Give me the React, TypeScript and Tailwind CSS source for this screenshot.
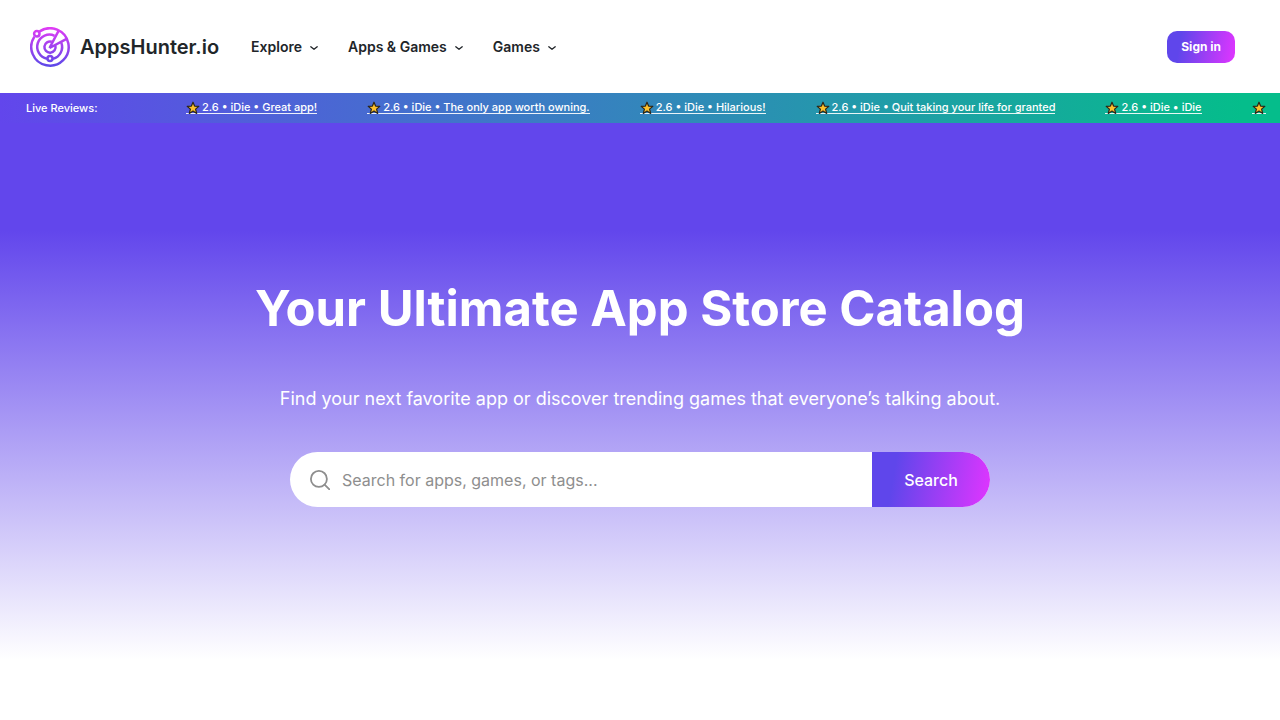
const menus = ['Explore', 'Apps & Games', 'Games']

const reviews = [
  { id: 1, rating: '2.6', app: 'iDie', text: 'Great app!' },
  { id: 2, rating: '2.6', app: 'iDie', text: 'The only app worth owning.' },
  { id: 3, rating: '2.6', app: 'iDie', text: 'Hilarious!' },
  { id: 4, rating: '2.6', app: 'iDie', text: 'Quit taking your life for granted' },
  { id: 5, rating: '2.6', app: 'iDie', text: 'iDie' },
]

function Logo() {
  return (
    <svg viewBox="0 0 40 40" className="size-10" fill="none" stroke="url(#logo)" strokeWidth="2.5" aria-hidden="true">
      <defs>
        <linearGradient id="logo" gradientUnits="userSpaceOnUse" x1="20" y1="0" x2="20" y2="40">
          <stop offset="0" stopColor="#e23bf5" />
          <stop offset="1" stopColor="#5a49e8" />
        </linearGradient>
      </defs>
      <path d="M9.6 4.4A18.7 18.7 0 1 1 4.4 9.6" />
      <circle cx="6.8" cy="6.8" r="2.7" />
      <path d="M24.6 8.8A12.2 12.2 0 1 0 17 31.8" />
      <path d="M31.2 15.4A12.2 12.2 0 0 1 23 31.8" />
      <circle cx="20" cy="31.6" r="2.5" />
      <path d="M21.8 14.8A5.6 5.6 0 1 0 25.4 18.6" />
      <path d="M19.5 21 28.8 3.4M19.5 21 36.6 11.8" />
    </svg>
  )
}

function Chevron() {
  return (
    <svg viewBox="0 0 8 8" className="mt-0.5 size-2" fill="none" stroke="currentColor" strokeWidth="1.4" aria-hidden="true">
      <path d="M0.8 2.8 4 5.2 7.2 2.8" strokeLinecap="round" strokeLinejoin="round" />
    </svg>
  )
}

function Star() {
  return (
    <svg viewBox="0 0 14 14" className="size-3.5 shrink-0" aria-hidden="true">
      <path
        d="M7 1.2 8.6 5.1 12.8 5.4 9.6 8.1 10.7 12.4 7 10.1 3.3 12.4 4.4 8.1 1.2 5.4 5.4 5.1Z"
        fill="#fbc02d"
        stroke="#2b2417"
        strokeWidth="1.2"
        strokeLinejoin="round"
      />
    </svg>
  )
}

function SearchIcon() {
  return (
    <svg viewBox="0 0 20 20" className="size-5 shrink-0" fill="none" stroke="#8e8e8e" strokeWidth="1.8" aria-hidden="true">
      <circle cx="8.9" cy="8.9" r="8" />
      <path d="m14.6 14.6 4.8 4.8" strokeLinecap="round" />
    </svg>
  )
}

function Header() {
  return (
    <header className="flex h-[93px] items-center justify-between bg-white pl-[30px] pr-[45px] text-[#212529]">
      <div className="flex items-center">
        <a href="#" className="flex items-center gap-2.5">
          <Logo />
          <span className="text-xl font-semibold">AppsHunter.io</span>
        </a>
        <nav className="ml-8 flex gap-[30px]">
          {menus.map((menu) => (
            <button key={menu} type="button" className="flex items-center gap-2 text-sm font-semibold">
              {menu}
              <Chevron />
            </button>
          ))}
        </nav>
      </div>
      <button
        type="button"
        className="h-8 rounded-[10px] bg-linear-[100deg,#5f46eb_20%,#e135ff] px-3.5 text-xs font-bold text-white"
      >
        Sign in
      </button>
    </header>
  )
}

function ReviewTicker() {
  return (
    <section className="flex h-[30px] items-center overflow-hidden bg-linear-[90deg,#6246ec,#3b7cc4_42%,#05bd8b_97%] pr-2.5 pl-[26px] text-[11px] font-medium whitespace-nowrap text-white">
      <p className="w-40 shrink-0">Live Reviews:</p>
      <div className="flex min-w-0 flex-1 gap-[50px] overflow-hidden py-1">
        {reviews.map((review) => (
          <a key={review.id} href="#" className="flex h-3 shrink-0 items-center gap-0.5 border-b border-white/90">
            <Star />
            <span>
              {review.rating} • {review.app} • {review.text}
            </span>
          </a>
        ))}
        <a href="#" aria-label="Next review" className="flex h-3 shrink-0 items-center border-b border-white/90">
          <Star />
        </a>
      </div>
    </section>
  )
}

function Hero() {
  return (
    <section className="flex flex-col items-center bg-linear-[180deg,#6246ec_20%,#ffffff] px-5 pt-[156px] pb-[153px] text-white">
      <h1 className="text-center text-[49px] leading-[60px] font-bold">Your Ultimate App Store Catalog</h1>
      <p className="mt-[46px] text-center text-lg leading-7">
        Find your next favorite app or discover trending games that everyone’s talking about.
      </p>
      <form className="mt-[39px] flex h-[55px] w-full max-w-[700px] overflow-hidden rounded-full bg-white">
        <label className="flex min-w-0 flex-1 items-center gap-3 pl-5">
          <SearchIcon />
          <input
            type="search"
            aria-label="Search"
            placeholder="Search for apps, games, or tags..."
            className="min-w-0 flex-1 text-base text-[#212529] outline-none placeholder:text-[#8e8e8e]"
          />
        </label>
        <button
          type="button"
          className="w-[118px] bg-linear-[100deg,#5f46eb_20%,#e135ff] text-base font-medium text-white"
        >
          Search
        </button>
      </form>
    </section>
  )
}

export default function App() {
  return (
    <div className="min-h-screen bg-white font-['Inter',sans-serif]">
      <Header />
      <ReviewTicker />
      <Hero />
    </div>
  )
}
